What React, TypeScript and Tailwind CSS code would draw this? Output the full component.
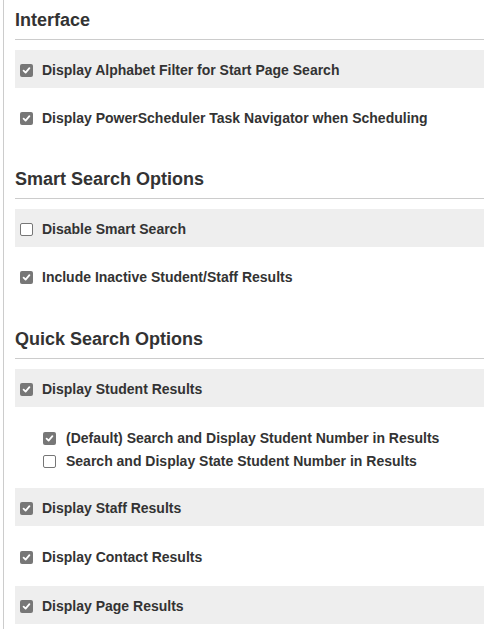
import React from "react";

function Box({ checked }: { checked: boolean }) {
  return checked ? (
    <span className="flex h-[13px] w-[13px] shrink-0 items-center justify-center rounded-[2px] bg-[#777777]">
      <svg width="9" height="9" viewBox="0 0 9 9">
        <path d="M1.6 4.7 L3.6 6.6 L7.4 2.2" fill="none" stroke="#ffffff" strokeWidth="1.8" strokeLinecap="round" strokeLinejoin="round" />
      </svg>
    </span>
  ) : (
    <span className="block h-[13px] w-[13px] shrink-0 rounded-[2px] border border-[#767676] bg-white" />
  );
}

function Row({ label, checked, shaded }: { label: string; checked: boolean; shaded?: boolean }) {
  return (
    <div className={`flex h-[38px] items-center pl-[5px] pt-[2px] ${shaded ? "bg-[#eeeeee]" : ""}`}>
      <Box checked={checked} />
      <span className="ml-[9px] text-[14px] font-bold leading-[17px] text-[#333333]">{label}</span>
    </div>
  );
}

function Heading({ title }: { title: string }) {
  return (
    <h3 className="border-b border-[#cccccc] pb-[9px] pt-[10px] text-[18px] font-bold leading-[20px] text-[#333333]">
      {title}
    </h3>
  );
}

export default function App() {
  return (
    <div className="h-[633px] bg-white font-['Liberation_Sans',Arial,sans-serif]">
      <div className="ml-[3px] min-h-[629px] border-l border-[#cccccc] pl-[11px]">
        <Heading title="Interface" />
        <div className="mt-[10px] flex flex-col gap-[10px]">
          <Row label="Display Alphabet Filter for Start Page Search" checked shaded />
          <Row label="Display PowerScheduler Task Navigator when Scheduling" checked />
        </div>

        <div className="mt-[23px]">
          <Heading title="Smart Search Options" />
        </div>
        <div className="mt-[10px] flex flex-col gap-[10px]">
          <Row label="Disable Smart Search" checked={false} shaded />
          <Row label="Include Inactive Student/Staff Results" checked />
        </div>

        <div className="mt-[24px]">
          <Heading title="Quick Search Options" />
        </div>
        <div className="mt-[10px] flex flex-col">
          <Row label="Display Student Results" checked shaded />
          <div className="flex flex-col pb-[10px] pl-[28px] pt-[19px]">
            <div className="flex h-[23px] items-center pt-[1px]">
              <Box checked />
              <span className="ml-[10px] text-[14px] font-bold leading-[17px] text-[#333333]">
                (Default) Search and Display Student Number in Results
              </span>
            </div>
            <div className="flex h-[23px] items-center pt-[1px]">
              <Box checked={false} />
              <span className="ml-[10px] text-[14px] font-bold leading-[17px] text-[#333333]">
                Search and Display State Student Number in Results
              </span>
            </div>
          </div>
          <div className="mt-[6px] flex flex-col gap-[11px]">
            <Row label="Display Staff Results" checked shaded />
            <Row label="Display Contact Results" checked />
            <Row label="Display Page Results" checked shaded />
          </div>
        </div>
      </div>
    </div>
  );
}
